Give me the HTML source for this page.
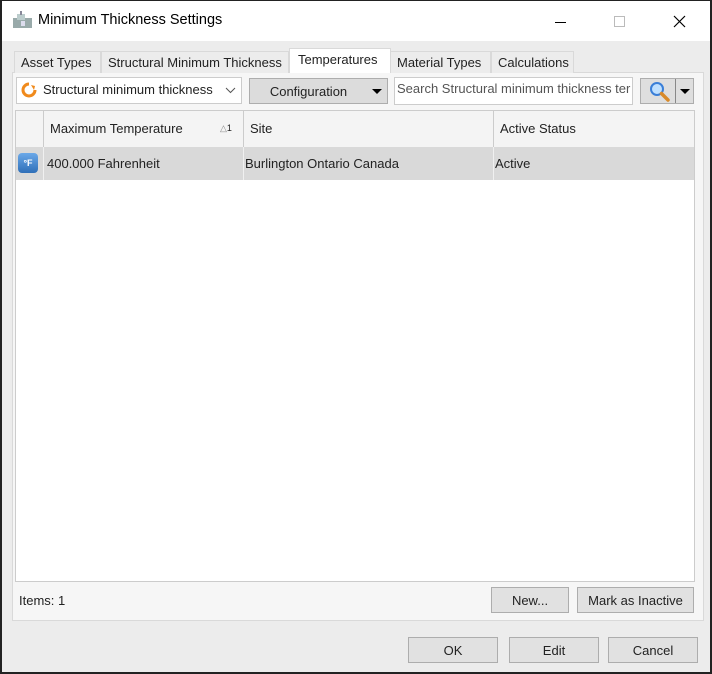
<!DOCTYPE html>
<html><head><style>
*{box-sizing:border-box;margin:0;padding:0}
body{width:712px;height:674px;overflow:hidden;background:#ececec;font-family:"Liberation Sans",sans-serif;font-size:13px;color:#222;position:relative}
.frame{position:absolute;left:0;top:0;width:712px;height:674px;border:2px solid #222;border-top-width:1px;border-right-width:2px}
.title{position:absolute;left:0;top:0;width:100%;height:41px;background:#fff}
.a{position:absolute}
.tab{position:absolute;top:51px;height:22px;background:#ececec;border:1px solid #d9d9d9;border-bottom:none;font-size:13px;padding-left:6px;line-height:21px;white-space:nowrap}
.btn{position:absolute;background:#e1e1e1;border:1px solid #adadad;text-align:center;font-size:13px}
.col{position:absolute;top:111px;height:36px;border-right:1px solid #ccc;line-height:36px;padding-left:7px;font-size:13px}
.cell{position:absolute;top:147px;height:33px;line-height:33px;font-size:13px;border-right:1px solid #f0f0f0;white-space:nowrap}
</style></head><body>
<div class="title">
<svg class="a" style="left:12px;top:11px" width="21" height="18"><rect x="1" y="7" width="19" height="10" fill="#9aa"/><rect x="5" y="3" width="8" height="6" fill="#bcc"/><rect x="8" y="0" width="2" height="4" fill="#889"/><rect x="9" y="10" width="4" height="5" fill="#dde"/></svg>
<div class="a" style="left:38px;top:12px;font-size:14.5px;color:#000">Minimum Thickness Settings</div>
<div class="a" style="left:555px;top:22px;width:11px;height:1px;background:#000"></div>
<div class="a" style="left:614px;top:16px;width:11px;height:11px;border:1px solid #bbb"></div>
<svg class="a" style="left:673px;top:15px" width="13" height="13"><path d="M1 1L12 12M12 1L1 12" stroke="#000" stroke-width="1.2"/></svg>
</div>
<div class="a" style="left:12px;top:72px;width:692px;height:549px;background:#f6f6f6;border:1px solid #d9d9d9"></div>
<div class="tab" style="left:14px;width:87px">Asset Types</div>
<div class="tab" style="left:101px;width:188px">Structural Minimum Thickness</div>
<div class="tab" style="left:289px;top:48px;height:25px;width:102px;background:#fff;padding-left:8px">Temperatures</div>
<div class="tab" style="left:390px;width:101px">Material Types</div>
<div class="tab" style="left:491px;width:83px">Calculations</div>
<div class="a" style="left:16px;top:77px;width:226px;height:27px;background:#fff;border:1px solid #ccc"></div>
<svg class="a" style="left:20px;top:82px" width="18" height="16"><path d="M9 2A6 6 0 1 0 15 8" stroke="#f08a1c" stroke-width="3" fill="none"/><path d="M11 3l4 1-1 4z" fill="#f08a1c"/></svg>
<div class="a" style="left:43px;top:82px;font-size:13px">Structural minimum thickness</div>
<svg class="a" style="left:225px;top:87px" width="11" height="7"><path d="M1 1l4.5 4.5L10 1" stroke="#555" fill="none"/></svg>
<div class="btn" style="left:249px;top:78px;width:139px;height:26px;line-height:25px;padding-right:20px;background:#dcdcdc">Configuration</div>
<svg class="a" style="left:372px;top:89px" width="10" height="6"><path d="M0 0h10L5 5z" fill="#000"/></svg>
<div class="a" style="left:394px;top:77px;width:239px;height:28px;background:#fff;border:1px solid #ccc;padding:3px 2px;font-size:13px;color:#555;white-space:nowrap;overflow:hidden">Search Structural minimum thickness ter</div>
<div class="btn" style="left:640px;top:78px;width:54px;height:26px;background:#dedede"></div>
<div class="a" style="left:675px;top:79px;width:1px;height:24px;background:#888"></div>
<svg class="a" style="left:649px;top:81px" width="22" height="22"><circle cx="8" cy="8" r="6" fill="#bfe0ff" stroke="#3a7fd8" stroke-width="2"/><path d="M12.5 12.5L19 19" stroke="#d88a2a" stroke-width="3.5" stroke-linecap="round"/></svg>
<svg class="a" style="left:680px;top:89px" width="10" height="6"><path d="M0 0h10L5 5z" fill="#000"/></svg>
<div class="a" style="left:15px;top:110px;width:680px;height:472px;background:#fff;border:1px solid #ccc"></div>
<div class="a" style="left:16px;top:111px;width:678px;height:36px;background:#f4f4f4"></div>
<div class="col" style="left:16px;width:28px"></div>
<div class="col" style="left:43px;width:201px">Maximum Temperature</div>
<div class="a" style="left:220px;top:123px;font-size:9px;color:#888">△<span style="color:#222">1</span></div>
<div class="col" style="left:243px;width:251px">Site</div>
<div class="col" style="left:493px;width:201px;border-right:none">Active Status</div>
<div class="a" style="left:16px;top:147px;width:678px;height:33px;background:#d9d9d9"></div>
<div class="a" style="left:18px;top:153px;width:20px;height:20px;border-radius:4px;background:linear-gradient(#6aa8e8,#2f6fb8);color:#fff;font-size:9px;font-weight:bold;text-align:center;line-height:20px">°F</div>
<div class="cell" style="left:43px;width:201px;padding-left:3px;border-left:1px solid #f0f0f0">400.000 Fahrenheit</div>
<div class="cell" style="left:243px;width:251px;padding-left:2px">Burlington Ontario Canada</div>
<div class="cell" style="left:493px;width:201px;padding-left:2px;border:none">Active</div>
<div class="a" style="left:19px;top:593px;font-size:13px">Items: 1</div>
<div class="btn" style="left:491px;top:587px;width:78px;height:26px;line-height:25px">New...</div>
<div class="btn" style="left:577px;top:587px;width:117px;height:26px;line-height:25px">Mark as Inactive</div>
<div class="btn" style="left:408px;top:637px;width:90px;height:26px;line-height:25px">OK</div>
<div class="btn" style="left:509px;top:637px;width:90px;height:26px;line-height:25px">Edit</div>
<div class="btn" style="left:608px;top:637px;width:90px;height:26px;line-height:25px">Cancel</div>
<div class="frame"></div>
</body></html>
